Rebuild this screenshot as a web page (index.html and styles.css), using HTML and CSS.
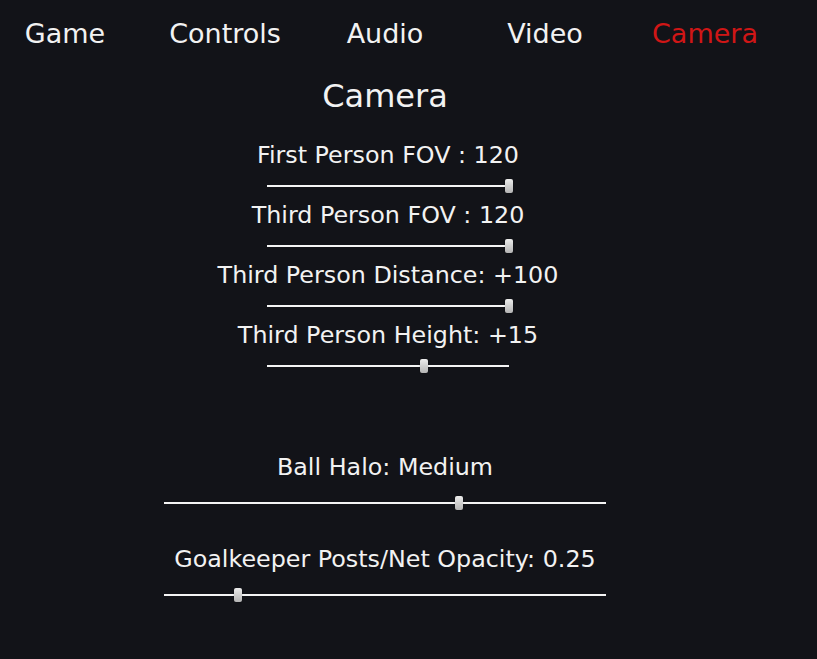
FILE: index.html
```html
<!DOCTYPE html>
<html>
<head>
<meta charset="utf-8">
<link rel="stylesheet" href="styles.css">
</head>
<body>
<nav class="tabs">
  <div class="tab">Game</div>
  <div class="tab">Controls</div>
  <div class="tab">Audio</div>
  <div class="tab">Video</div>
  <div class="tab active">Camera</div>
</nav>
<main class="panel">
  <h1 class="title">Camera</h1>
  <section class="group small">
    <div class="row">
      <div class="label">First Person FOV : 120</div>
      <div class="track"><div class="line"></div><div class="thumb" style="left:100%"></div></div>
    </div>
    <div class="row">
      <div class="label">Third Person FOV : 120</div>
      <div class="track"><div class="line"></div><div class="thumb" style="left:100%"></div></div>
    </div>
    <div class="row">
      <div class="label">Third Person Distance: +100</div>
      <div class="track"><div class="line"></div><div class="thumb" style="left:100%"></div></div>
    </div>
    <div class="row">
      <div class="label">Third Person Height: +15</div>
      <div class="track"><div class="line"></div><div class="thumb" style="left:65%"></div></div>
    </div>
  </section>
  <section class="group wide">
    <div class="row">
      <div class="label">Ball Halo: Medium</div>
      <div class="track"><div class="line"></div><div class="thumb" style="left:66.7%"></div></div>
    </div>
    <div class="row">
      <div class="label">Goalkeeper Posts/Net Opacity: 0.25</div>
      <div class="track"><div class="line"></div><div class="thumb" style="left:16.7%"></div></div>
    </div>
  </section>
</main>
</body>
</html>
```

FILE: styles.css
```css
html, body {
  margin: 0;
  padding: 0;
  background: #121318;
  color: #f2f2f2;
  font-family: "DejaVu Sans", "Liberation Sans", sans-serif;
  width: 817px;
  height: 659px;
  overflow: hidden;
}

.tabs {
  display: grid;
  grid-template-columns: repeat(5, 160px);
  margin-left: -15px;
  padding-top: 14px;
}

.tab {
  text-align: center;
  font-size: 27px;
  line-height: 40px;
  font-weight: normal;
}

.tab.active {
  color: #d01616;
}

.panel {
  width: 770px;
  display: flex;
  flex-direction: column;
  align-items: center;
}

.title {
  margin: 22px 0 0 0;
  font-size: 32px;
  line-height: 40px;
  font-weight: normal;
}

.group {
  display: flex;
  flex-direction: column;
  align-items: center;
}

.group.small {
  margin-top: 24px;
  padding-left: 6px;
}

.group.small .track {
  width: 242px;
  margin: 9px 0 7px 0;
}

.group.wide {
  margin-top: 72px;
  gap: 34px;
}

.group.wide .track {
  width: 442px;
  margin-top: 14px;
}

.row {
  display: flex;
  flex-direction: column;
  align-items: center;
}

.label {
  font-size: 23.8px;
  line-height: 30px;
  white-space: nowrap;
}

.track {
  position: relative;
  height: 14px;
  display: flex;
  align-items: center;
}

.line {
  width: 100%;
  height: 2px;
  background: #f4f4f4;
}

.thumb {
  position: absolute;
  top: 0;
  width: 8px;
  height: 14px;
  margin-left: -4px;
  border-radius: 2px;
  background: linear-gradient(#ececec, #b4b4b4);
  box-shadow: 0 0 1px rgba(0,0,0,0.6);
}
```
